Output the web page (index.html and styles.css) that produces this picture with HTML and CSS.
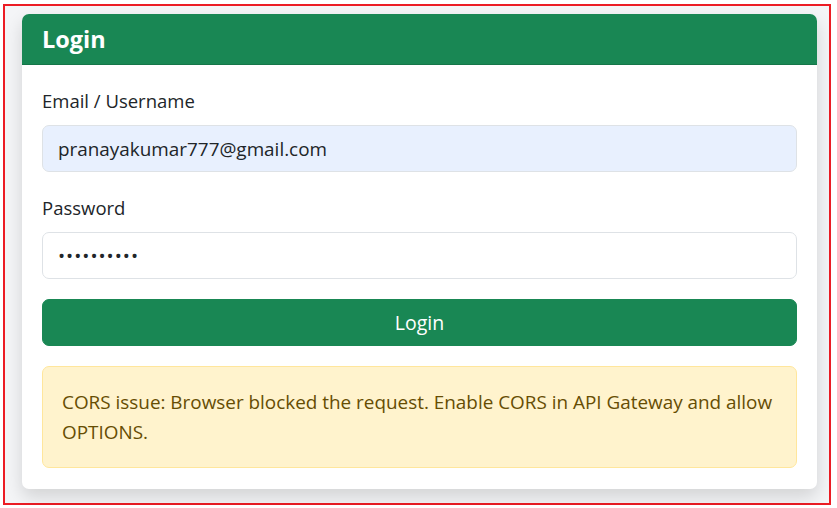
FILE: index.html
```html
<!DOCTYPE html>
<html lang="en">
<head>
<meta charset="utf-8">
<title>Login</title>
<link rel="stylesheet" href="styles.css">
</head>
<body>
<div class="frame">
  <div class="card">
    <div class="card-header"><h5 class="card-title">Login</h5></div>
    <div class="card-body">
      <div class="field">
        <label class="label" for="email">Email / Username</label>
        <input class="input input-autofill" id="email" type="text" value="pranayakumar777@gmail.com">
      </div>
      <div class="field">
        <label class="label" for="password">Password</label>
        <input class="input input-password" id="password" type="password" value="abcdefghij">
      </div>
      <button class="btn" type="button">Login</button>
      <div class="alert">CORS issue: Browser blocked the request. Enable CORS in API Gateway and allow OPTIONS.</div>
    </div>
  </div>
</div>
</body>
</html>
```

FILE: styles.css
```css
* { box-sizing: border-box; }
html, body { margin: 0; padding: 0; background: #ffffff; }
body {
  font-family: "Open Sans", "Noto Sans", "Liberation Sans", sans-serif;
  color: #212529;
}
.frame {
  margin: 4px 0 0 3px;
  width: 828px;
  height: 501px;
  border: 2px solid #ec1c24;
  background: #f4f5f7;
  padding: 8px 12px 14px 17px;
}
.card {
  background: #ffffff;
  border-radius: 7px;
  box-shadow: 0 8px 18px rgba(0, 0, 0, 0.14);
  overflow: hidden;
  height: 475px;
}
.card-header {
  background: #198754;
  color: #ffffff;
  padding: 10px 20px;
  height: 51px;
  border-bottom: 1px solid rgba(0,0,0,0.12);
}
.card-title {
  margin: 0;
  font-size: 23.5px;
  font-weight: 700;
  line-height: 31px;
}
.card-body {
  padding: 20px;
}
.field { margin-bottom: 20px; }
.label {
  display: block;
  font-size: 18.5px;
  line-height: 30px;
  padding-top: 1px;
  margin-bottom: 9px;
}
.input {
  display: block;
  width: 100%;
  height: 47px;
  padding: 0 15px;
  font-family: inherit;
  font-size: 18.9px;
  color: #212529;
  background: #ffffff;
  border: 1px solid #dee2e6;
  border-radius: 7px;
  outline: none;
}
.input-autofill { background: #e8f0fe; }
.input-password { letter-spacing: 1px; }
.btn {
  display: block;
  width: 100%;
  height: 47px;
  font-family: inherit;
  font-size: 19.5px;
  color: #ffffff;
  background: #198754;
  border: 1px solid #198754;
  border-radius: 7px;
  cursor: pointer;
}
.alert {
  margin-top: 20px;
  padding: 20px 19px;
  font-size: 18.9px;
  line-height: 30px;
  color: #664d03;
  background: #fff3cd;
  border: 1px solid #ffe69c;
  border-radius: 7px;
}
```
